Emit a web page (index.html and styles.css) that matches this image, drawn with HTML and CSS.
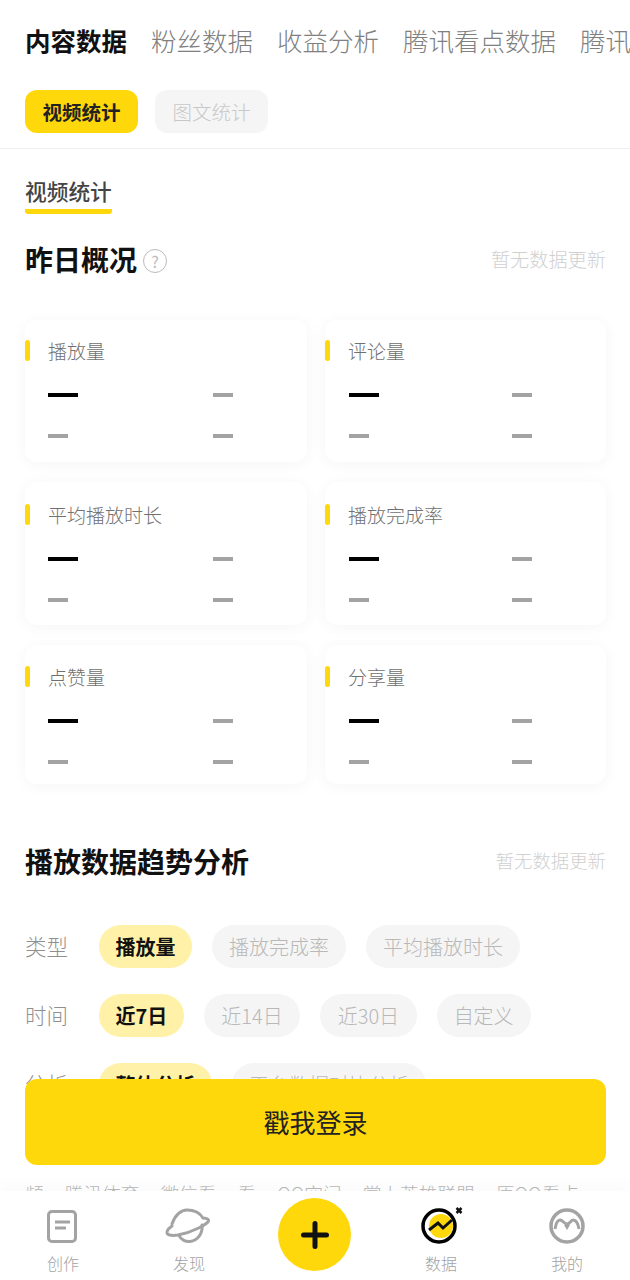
FILE: index.html
```html
<!DOCTYPE html>
<html lang="zh-CN">
<head>
  <meta charset="UTF-8">
  <meta name="viewport" content="width=device-width, initial-scale=1.0">
  <title>内容数据</title>
  <link rel="stylesheet" href="styles.css">
</head>
<body>
  <div class="app">
    <main class="content">
      <nav class="top-tabs">
        <span class="top-tab active">内容数据</span>
        <span class="top-tab">粉丝数据</span>
        <span class="top-tab">收益分析</span>
        <span class="top-tab">腾讯看点数据</span>
        <span class="top-tab">腾讯</span>
      </nav>
      <div class="sub-tabs">
        <span class="sub-tab active">视频统计</span>
        <span class="sub-tab">图文统计</span>
      </div>
      <div class="section-tab"><span>视频统计</span></div>

      <div class="section-head head-first">
        <h2>昨日概况<span class="help">?</span></h2>
        <span class="update">暂无数据更新</span>
      </div>

      <div class="cards">
        <div class="card">
          <div class="card-title">播放量</div>
          <div class="dash-grid"><i class="dash big"></i><i class="dash"></i><i class="dash"></i><i class="dash"></i></div>
        </div>
        <div class="card">
          <div class="card-title">评论量</div>
          <div class="dash-grid"><i class="dash big"></i><i class="dash"></i><i class="dash"></i><i class="dash"></i></div>
        </div>
        <div class="card">
          <div class="card-title">平均播放时长</div>
          <div class="dash-grid"><i class="dash big"></i><i class="dash"></i><i class="dash"></i><i class="dash"></i></div>
        </div>
        <div class="card">
          <div class="card-title">播放完成率</div>
          <div class="dash-grid"><i class="dash big"></i><i class="dash"></i><i class="dash"></i><i class="dash"></i></div>
        </div>
        <div class="card">
          <div class="card-title">点赞量</div>
          <div class="dash-grid"><i class="dash big"></i><i class="dash"></i><i class="dash"></i><i class="dash"></i></div>
        </div>
        <div class="card">
          <div class="card-title">分享量</div>
          <div class="dash-grid"><i class="dash big"></i><i class="dash"></i><i class="dash"></i><i class="dash"></i></div>
        </div>
      </div>

      <div class="section-head head-trend">
        <h2>播放数据趋势分析</h2>
        <span class="update">暂无数据更新</span>
      </div>

      <div class="filter">
        <span class="filter-label">类型</span>
        <span class="chip on">播放量</span>
        <span class="chip">播放完成率</span>
        <span class="chip">平均播放时长</span>
      </div>
      <div class="filter">
        <span class="filter-label">时间</span>
        <span class="chip on">近7日</span>
        <span class="chip num">近14日</span>
        <span class="chip num">近30日</span>
        <span class="chip">自定义</span>
      </div>
      <div class="filter">
        <span class="filter-label">分析</span>
        <span class="chip on">整体分析</span>
        <span class="chip">平台数据对比分析</span>
      </div>
      <div class="platforms">
        <span>频</span><span>腾讯体育</span><span>微信看</span><span>看</span><span>QQ空间</span><span>掌上英雄联盟</span><span>原QQ看点</span>
      </div>
    </main>

    <button class="login">戳我登录</button>

    <footer class="tabbar">
      <div class="tab">
        <svg width="34" height="40" viewBox="0 0 34 40"><rect x="2.500" y="5.500" width="27" height="30" rx="3.500" fill="none" stroke="#a3a3a3" stroke-width="3"/><path d="M9 16h15M9 22h11" fill="none" stroke="#a3a3a3" stroke-width="2.800"/></svg>
        <span>创作</span>
      </div>
      <div class="tab">
        <svg width="48" height="40" viewBox="0 0 48 40"><g transform="translate(1 2)" fill="none" stroke="#a3a3a3" stroke-width="3" stroke-linecap="round"><path d="M6 16C9 7 15 2 21 2c7 0 13 3 16 8 3 0 6 1 5.500 3-1.500 3-14.500 11-30.500 14-7 1-11 0-11-2.500 0-2.500 2-4.500 5-6.500"/><path d="M13 27.500c2 4.500 7 6.500 11 6 8-1 13-8.500 12-16.500"/></g></svg>
        <span>发现</span>
      </div>
      <div class="tab tab-plus">
        <div class="plus">
          <svg width="28" height="28" viewBox="0 0 28 28"><path d="M14 2.500v23M2.500 14h23" stroke="#111" stroke-width="5" stroke-linecap="round"/></svg>
        </div>
      </div>
      <div class="tab">
        <svg width="44" height="40" viewBox="0 0 44 40"><circle cx="20" cy="20" r="16" fill="#fff" stroke="#000" stroke-width="3.500"/><circle cx="22" cy="20" r="12" fill="#ffd80c"/><path d="M10 24l9-7 5 5 9-8" fill="none" stroke="#111" stroke-width="3"/><path d="M37.500 2l5 5M42.500 2l-5 5" stroke="#111" stroke-width="2.500"/></svg>
        <span>数据</span>
      </div>
      <div class="tab">
        <svg width="40" height="40" viewBox="0 0 40 40"><circle cx="20" cy="20" r="16" fill="none" stroke="#a3a3a3" stroke-width="3.500"/><path d="M8 23c1-6 3-9 5-9 3 0 4 4 7 4s4-4 6-4c3 0 5 3 6 9" fill="none" stroke="#a3a3a3" stroke-width="3"/><path d="M17 19l3 5 3-5z" fill="#a3a3a3"/></svg>
        <span>我的</span>
      </div>
    </footer>
  </div>
</body>
</html>
```

FILE: styles.css
```css
* {
  box-sizing: border-box;
}
html, body {
  margin: 0;
  height: 100%;
}
body {
  font-family: "Noto Sans CJK SC", "Noto Sans", sans-serif;
  background-color: #fff;
  overflow: hidden;
}
.app {
  position: relative;
  width: 630px;
  height: 1280px;
  display: flex;
  flex-direction: column;
  overflow: hidden;
}
.content {
  flex: 1;
  min-height: 0;
  overflow: hidden;
}
.top-tabs {
  display: flex;
  gap: 24px;
  height: 90px;
  padding: 22px 0 0 25px;
  white-space: nowrap;
  overflow: hidden;
}
.top-tab {
  font-size: 25.500px;
  line-height: 36px;
  font-weight: 300;
  color: #808080;
}
.top-tab.active {
  color: #111;
  font-weight: 700;
}
.sub-tabs {
  display: flex;
  gap: 17px;
  height: 59px;
  padding-left: 25px;
  border-bottom: 1px solid #efefef;
}
.sub-tab {
  width: 113px;
  height: 43px;
  border-radius: 12px;
  background-color: #f5f5f5;
  color: #c8c8c8;
  font-size: 19.500px;
  font-weight: 300;
  line-height: 43px;
  text-align: center;
}
.sub-tab.active {
  background-color: #ffd80c;
  color: #222;
  font-weight: 700;
}
.section-tab {
  padding: 26px 0 0 25px;
  height: 65px;
}
.section-tab span {
  display: inline-block;
  width: 87px;
  height: 39px;
  font-size: 21.700px;
  line-height: 31px;
  font-weight: 500;
  color: #444;
  white-space: nowrap;
  border-bottom: 5px solid #ffd80c;
  border-radius: 0 0 3px 3px;
}
.section-head {
  display: flex;
  justify-content: space-between;
  padding: 0 24px 0 25px;
}
.head-first {
  height: 106px;
  padding-top: 23px;
}
.head-trend {
  margin-top: 55px;
  height: 86px;
}
.section-head h2 {
  display: flex;
  align-items: center;
  margin: 0;
  height: 44px;
  font-size: 28px;
  font-weight: 700;
  color: #111;
}
.update {
  font-size: 19.200px;
  font-weight: 300;
  line-height: 44px;
  color: #d0d0d0;
}
.head-trend .update {
  font-size: 18.400px;
  line-height: 42px;
}
.help {
  width: 24px;
  height: 24px;
  margin: 3px 0 0 6px;
  border: 1px solid #bbb;
  border-radius: 50%;
  font-size: 16px;
  font-weight: 400;
  line-height: 22px;
  text-align: center;
  color: #bbb;
}
.cards {
  display: grid;
  grid-template-columns: 282px 281px;
  grid-template-rows: 142px 143px 139px;
  column-gap: 18px;
  row-gap: 20px;
  padding: 0 25px;
}
.card {
  padding: 17px 0 0 23px;
  border-radius: 12px;
  background-color: #fff;
  box-shadow: 0 2px 16px rgba(0, 0, 0, 0.045);
}
.card:nth-child(3), .card:nth-child(4) {
  padding-top: 19px;
}
.card:nth-child(5), .card:nth-child(6) {
  padding-top: 18px;
}
.card-title {
  position: relative;
  font-size: 19px;
  line-height: 28px;
  font-weight: 300;
  color: #707070;
}
.card-title::before {
  content: "";
  position: absolute;
  left: -23px;
  top: 3px;
  width: 5px;
  height: 21px;
  border-radius: 3px;
  background-color: #ffd80c;
}
.dash-grid {
  display: grid;
  grid-template-columns: 165px 1fr;
  row-gap: 37px;
  padding-top: 28px;
}
.card:nth-child(even) .dash-grid {
  grid-template-columns: 163px 1fr;
  margin-left: 1px;
}
.dash {
  display: block;
  width: 20px;
  height: 4px;
  background-color: #a3a3a3;
}
.dash.big {
  width: 30px;
  background-color: #000;
}
.filter {
  display: flex;
  align-items: center;
  gap: 20px;
  height: 43px;
  margin-bottom: 26px;
  padding-left: 25px;
}
.filter-label {
  width: 54px;
  margin-top: -3px;
  font-size: 21.500px;
  font-weight: 300;
  color: #909090;
}
.chip {
  height: 43px;
  padding: 0 17px;
  border-radius: 22px;
  background-color: #f5f5f5;
  color: #b8b8b8;
  font-size: 20px;
  font-weight: 300;
  line-height: 43px;
}
.chip.num {
  padding: 0 17.500px;
}
.chip.on {
  padding: 0 16.500px;
  background-color: #fff1a8;
  color: #111;
  font-weight: 700;
}
.platforms {
  display: flex;
  gap: 21px;
  padding: 49px 0 0 25px;
  font-size: 18.700px;
  font-weight: 300;
  line-height: 24px;
  color: #b8b8b8;
  white-space: nowrap;
}
.login {
  position: absolute;
  left: 25px;
  top: 1079px;
  width: 581px;
  height: 86px;
  padding-bottom: 3px;
  border: 0;
  border-radius: 12px;
  background-color: #ffd80c;
  font-family: inherit;
  font-size: 26px;
  color: #222;
}
.tabbar {
  position: relative;
  display: grid;
  grid-template-columns: repeat(5, 126px);
  flex: 0 0 auto;
  height: 89px;
  background-color: #fff;
  box-shadow: 0 -8px 16px rgba(0, 0, 0, 0.02);
}
.tab {
  display: flex;
  flex-direction: column;
  align-items: center;
  padding-top: 15px;
  font-size: 16px;
  font-weight: 300;
  color: #a3a3a3;
}
.tab svg {
  display: block;
}
.tab span {
  margin-top: 6px;
  line-height: 22px;
}
.tab-plus {
  position: relative;
}
.plus {
  position: absolute;
  top: 7px;
  left: 26px;
  display: flex;
  align-items: center;
  justify-content: center;
  width: 73px;
  height: 73px;
  border-radius: 50%;
  background-color: #ffd80c;
}
```
